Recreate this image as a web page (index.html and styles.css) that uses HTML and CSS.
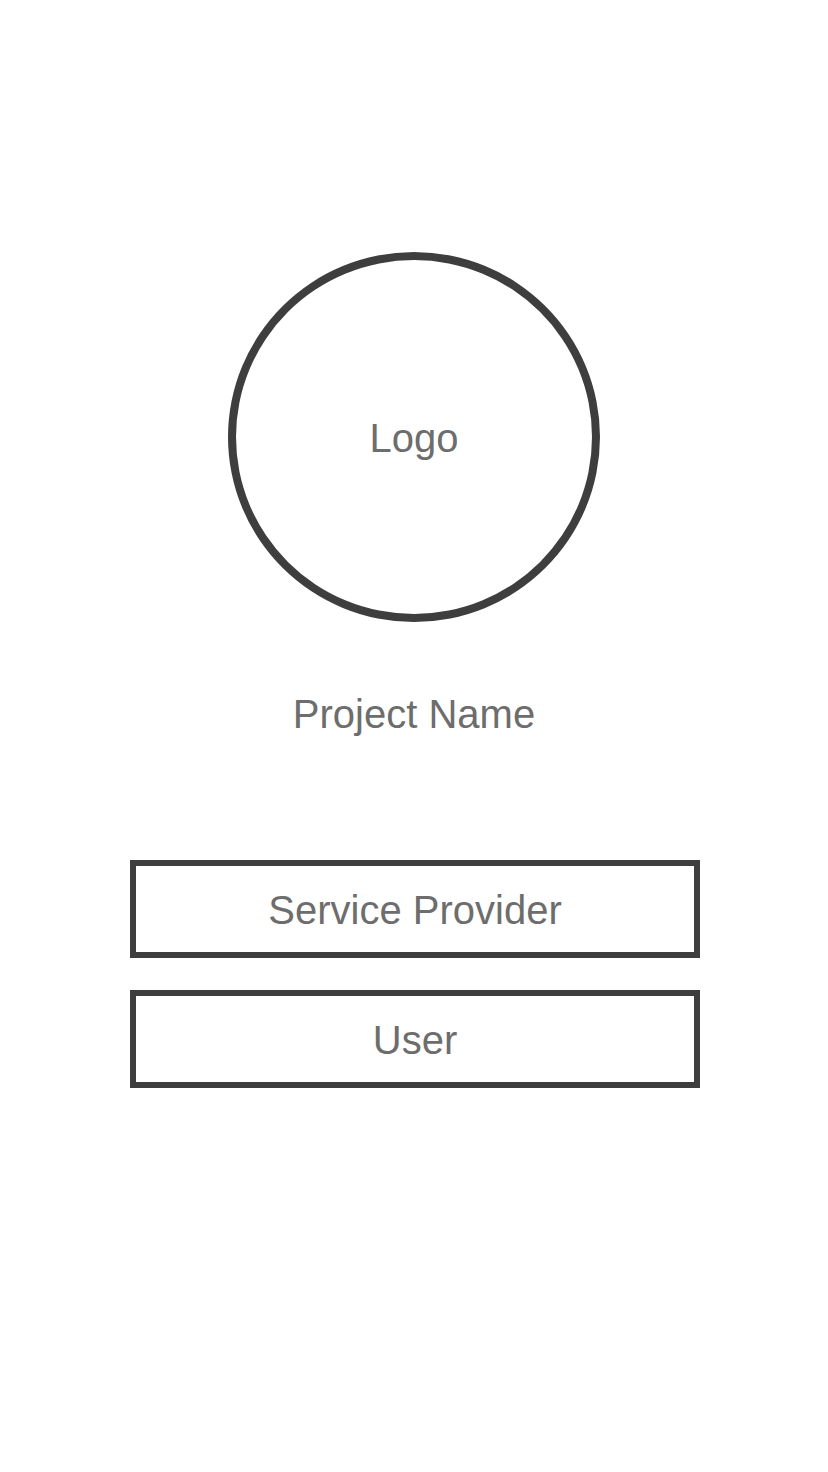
FILE: index.html
```html
<!DOCTYPE html>
<html lang="en">
<head>
<meta charset="utf-8">
<meta name="viewport" content="width=device-width, initial-scale=1">
<title>Project Name</title>
<link rel="stylesheet" href="styles.css">
</head>
<body>
<main class="welcome">
  <div class="logo">Logo</div>
  <h1 class="title">Project Name</h1>
  <div class="actions">
    <button class="action" type="button">Service Provider</button>
    <button class="action" type="button">User</button>
  </div>
</main>
</body>
</html>
```
FILE: styles.css
```css
* {
  box-sizing: border-box;
}

body {
  margin: 0;
  background: #ffffff;
  color: #6d6d6d;
  font-family: "Liberation Sans", Arial, sans-serif;
  font-size: 40px;
  line-height: 48px;
}

.welcome {
  display: flex;
  flex-direction: column;
  align-items: center;
  padding: 252px 128px 128px;
}

.logo {
  display: flex;
  align-items: center;
  justify-content: center;
  width: 372px;
  max-width: 100%;
  height: 370px;
  padding-top: 2px;
  border: 8px solid #3e3e3e;
  border-radius: 50%;
}

.title {
  margin: 68px 0 122px;
  font-size: 40px;
  font-weight: 400;
}

.actions {
  display: flex;
  flex-direction: column;
  gap: 32px;
  width: 100%;
  padding-left: 2px;
}

.action {
  width: 100%;
  padding: 20px 16px 18px;
  border: 6px solid #3e3e3e;
  border-radius: 0;
  background: transparent;
  color: inherit;
  font: inherit;
  cursor: pointer;
}
```
